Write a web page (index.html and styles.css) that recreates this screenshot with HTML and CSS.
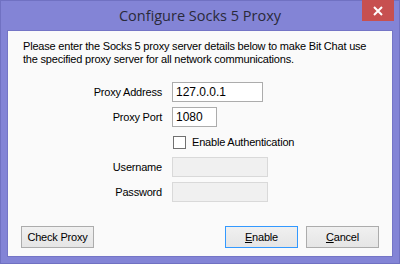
FILE: index.html
```html
<!DOCTYPE html>
<html lang="en">
<head>
  <meta charset="UTF-8" />
  <title>Configure Socks 5 Proxy</title>
  <link rel="stylesheet" href="styles.css">
</head>
<body>
  <div class="window">
    <div class="titlebar">
      <span class="title">Configure Socks 5 Proxy</span>
      <button class="close" title="Close">
        <svg width="10" height="10" viewBox="0 0 10 10">
          <path d="M1 1L9 9M9 1L1 9" stroke="#fff" stroke-width="2" />
        </svg>
      </button>
    </div>
    <div class="client">
      <p class="intro">Please enter the Socks 5 proxy server details below to make Bit Chat use<br>the specified proxy server for all network communications.</p>
      <div class="form">
        <div class="row">
          <label class="label" for="proxyAddress">Proxy Address</label>
          <input class="field address" id="proxyAddress" type="text" value="127.0.0.1" />
        </div>
        <div class="row">
          <label class="label" for="proxyPort">Proxy Port</label>
          <input class="field port" id="proxyPort" type="text" value="1080" />
        </div>
        <div class="row">
          <span class="label"></span>
          <label class="check"><input type="checkbox" id="enableAuth" /> Enable Authentication</label>
        </div>
        <div class="row">
          <label class="label" for="username">Username</label>
          <input class="field wide" id="username" type="text" disabled />
        </div>
        <div class="row">
          <label class="label" for="password">Password</label>
          <input class="field wide" id="password" type="password" disabled />
        </div>
      </div>
      <div class="buttons">
        <button class="btn">Check Proxy</button>
        <span class="spacer"></span>
        <button class="btn default"><u>E</u>nable</button>
        <button class="btn"><u>C</u>ancel</button>
      </div>
    </div>
  </div>
</body>
</html>
```

FILE: styles.css
```css
body {
  margin: 0;
  padding: 0;
  font-family: 'Liberation Sans', Arial, sans-serif;
  font-size: 11px;
  letter-spacing: -0.2px;
  color: #000;
}
.window {
  width: 400px;
  height: 264px;
  box-sizing: border-box;
  background: #8384d6;
  border: 1px solid #7071c2;
  padding: 0 6px 6px 6px;
  display: flex;
  flex-direction: column;
  position: relative;
}
.titlebar {
  height: 29px;
  display: flex;
  justify-content: center;
  align-items: center;
}
.title {
  font-family: 'Open Sans', 'Noto Sans', sans-serif;
  font-size: 14.5px;
  letter-spacing: 0;
  color: #2a2a3a;
  margin-top: -1px;
}
.close {
  position: absolute;
  top: -1px;
  right: 5px;
  width: 32px;
  height: 21px;
  border: none;
  background: #c75050;
  padding: 0;
  display: flex;
  align-items: center;
  justify-content: center;
}
.client {
  flex: 1;
  background: #fafafa;
  border: 1px solid #7475c6;
  padding: 9px 13px 8px 13px;
  display: flex;
  flex-direction: column;
}
.intro {
  margin: 0 0 0 2px;
  line-height: 13px;
  white-space: nowrap;
}
.form {
  margin-top: 16px;
  display: flex;
  flex-direction: column;
  gap: 5px;
}
.row {
  display: flex;
  align-items: center;
  height: 20px;
}
.label {
  width: 141px;
  margin-right: 10px;
  text-align: right;
}
.field {
  box-sizing: border-box;
  height: 20px;
  border: 1px solid #acacac;
  background: #fff;
  padding: 0 3px;
  font-family: 'Liberation Sans', Arial, sans-serif;
  font-size: 12px;
  color: #000;
  outline: none;
}
.field:disabled {
  background: #f0f0f0;
  border-color: #d9d9d9;
}
.address {
  width: 91px;
}
.port {
  width: 45px;
}
.wide {
  width: 96px;
}
.check {
  display: flex;
  align-items: center;
  gap: 6px;
}
.check input {
  appearance: none;
  margin: 0 0 0 1px;
  width: 13px;
  height: 13px;
  border: 1px solid #707070;
  background: #fff;
}
.buttons {
  margin-top: auto;
  display: flex;
  gap: 8px;
}
.spacer {
  flex: 1;
}
.btn {
  width: 73px;
  height: 22px;
  border: 1px solid #acacac;
  background: linear-gradient(#f0f0f0, #e5e5e5);
  font-family: 'Liberation Sans', Arial, sans-serif;
  font-size: 11px;
  letter-spacing: -0.2px;
  color: #000;
  padding: 0;
}
.btn.default {
  border-color: #3399ff;
}
```
